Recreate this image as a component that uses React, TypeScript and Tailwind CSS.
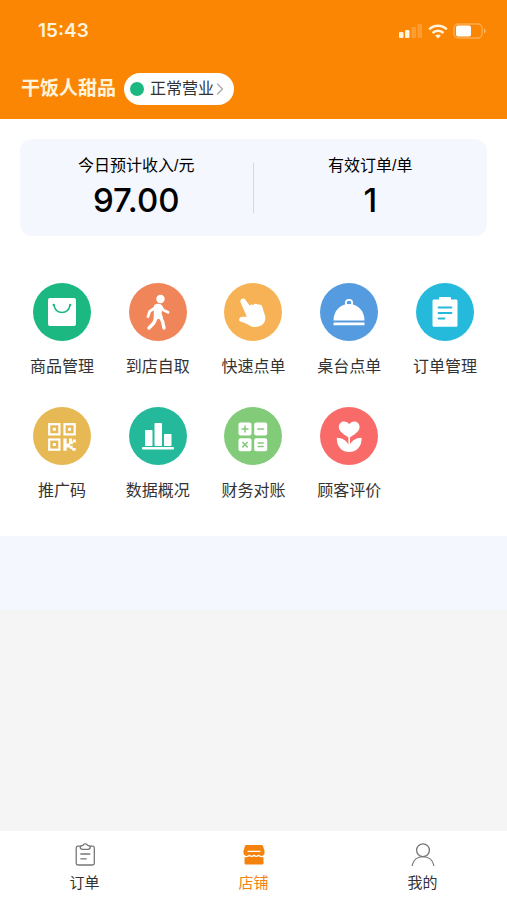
import { ChevronRight } from "lucide-react";
import { clsx } from "clsx";

const BagIcon = () => (
  <svg viewBox="0 0 58 58" className="size-full" fill="none" aria-hidden="true">
    <rect x="15" y="15" width="28" height="28" rx="2" fill="#fff" />
    <path d="M21 22.500c1 4.500 4 7 8 7s7-2.500 8-7" stroke="#1bb981" strokeWidth="1.500" strokeLinecap="round" />
    <circle cx="20.800" cy="22" r="1.200" fill="#1bb981" />
    <circle cx="37.200" cy="22" r="1.200" fill="#1bb981" />
  </svg>
);

const WalkIcon = () => (
  <svg viewBox="0 0 58 58" className="size-full" fill="none" stroke="#fff" strokeLinecap="round" strokeLinejoin="round" aria-hidden="true">
    <circle cx="31.500" cy="16" r="4.200" fill="#fff" stroke="none" />
    <path d="M26 22.500c2-1.200 5-1.200 6.500.5l-.8 7.500 1.300 4-7.500 1z" fill="#fff" strokeWidth="1.800" />
    <path d="M26.500 24.500l-5.800 3.800-1.700 5.400M32 24l2.800 3.300 4.200 2" strokeWidth="2.800" />
    <path d="M27.200 34.500l-2.400 5.500-4.800 5M31 33.500l2.500 4.700 1.500 6.800" strokeWidth="3.400" />
  </svg>
);

const HandIcon = () => (
  <svg viewBox="0 0 58 58" className="size-full" fill="#fff" aria-hidden="true">
    <path d="M16.600 19.600c-1.500-3.300 3-5.700 5-2.600l3.900 5.500c.8-1 2.600-1.300 3.900-.4 1.300-1.600 3.300-1.600 4.600-.3 1.900-.9 3.700 0 4.200 1.800l2.800 8.800c1.300 4.700-.6 8.300-4 10.100-3.600 1.900-8.200 1.900-11.600-.1-3-1.700-5.200-2.700-8.300-3.600-2.900-.9-2.400-4.500.3-4.900 2-.3 3.600 0 5.400-.4z" />
  </svg>
);

const ClocheIcon = () => (
  <svg viewBox="0 0 58 58" className="size-full" fill="#fff" aria-hidden="true">
    <circle cx="29" cy="20" r="3.200" fill="none" stroke="#fff" strokeWidth="1.800" />
    <path d="M13.500 37.500C13.500 28 20 21 29 21s15.500 7 15.500 16.500z" />
    <rect x="13.500" y="39.500" width="31" height="2.800" rx=".5" />
  </svg>
);

const ClipboardIcon = () => (
  <svg viewBox="0 0 58 58" className="size-full" fill="none" aria-hidden="true">
    <path d="M18 16.500h5v-1.200c0-.8.400-1.300 1.200-1.300h9.600c.8 0 1.200.5 1.200 1.300v1.200h5c1 0 1.500.6 1.500 1.500v24.300c0 1-.6 1.500-1.500 1.500H18c-1 0-1.500-.6-1.500-1.500V18c0-1 .6-1.500 1.500-1.500z" fill="#fff" />
    <path d="M22.500 24.500h13M22.500 30h13M22.500 35.500h6" stroke="#25badb" strokeWidth="1.800" strokeLinecap="round" />
  </svg>
);

const QrIcon = () => (
  <svg viewBox="0 0 58 58" className="size-full" fill="#fff" aria-hidden="true">
    <g fill="none" stroke="#fff" strokeWidth="2.200">
      <rect x="16.200" y="17.200" width="10.200" height="10.200" />
      <rect x="31.500" y="17.200" width="10.200" height="10.200" />
      <rect x="16.200" y="32.500" width="10.200" height="10.200" />
    </g>
    <path d="M19.800 20.800h3v3h-3zM35.100 20.800h3v3h-3zM19.800 36.100h3v3h-3z" />
    <path d="M30.400 31.400h3.200v12.300h-3.200zM36 31.400h3v3.200h-3zM39.800 32.500h3v3h-3zM33.600 36.500h2.400v-2h3.800v2.800H37v3.200h-3.400zM37 38.700h2.700v2.400h3v2.600h-3.400v-1.800H37z" />
  </svg>
);

const BarsIcon = () => (
  <svg viewBox="0 0 58 58" className="size-full" fill="#fff" aria-hidden="true">
    <rect x="16" y="23" width="7.500" height="16" rx=".8" />
    <rect x="25.500" y="16" width="7.500" height="23" rx=".8" />
    <rect x="35" y="27" width="7.500" height="12" rx=".8" />
    <rect x="13" y="40" width="32" height="2.600" rx="1" />
  </svg>
);

const CalcIcon = () => (
  <svg viewBox="0 0 58 58" className="size-full" fill="#fff" aria-hidden="true">
    <rect x="14.500" y="15.500" width="13" height="13" rx="2" />
    <rect x="30.200" y="15.500" width="13" height="13" rx="2" />
    <rect x="14.500" y="31.200" width="13" height="13" rx="2" />
    <rect x="30.200" y="31.200" width="13" height="13" rx="2" />
    <path
      d="M17.500 22h7M21 18.500v7M33.200 22h7M18.300 35l5.400 5.400M23.700 35l-5.400 5.400M33.700 36h6M33.700 39.500h6"
      fill="none"
      stroke="#82cb78"
      strokeWidth="1.500"
    />
  </svg>
);

const FlowerIcon = () => (
  <svg viewBox="0 0 58 58" className="size-full" fill="#fff" aria-hidden="true">
    <path d="M29.200 31c-4.500-3-10.400-6.400-10.400-10.700 0-6.300 7.400-7.600 10.400-3 3-4.600 10.400-3.300 10.400 3 0 4.300-5.900 7.700-10.400 10.700z" />
    <path d="M28.400 30h1.600v10h-1.600z" />
    <path d="M16.800 30.800c6 0 10 3 12.400 8 2.400-5 6.400-8 12.400-8 .2 8.700-4.600 14.200-12.400 14.200s-12.600-5.500-12.400-14.200z" />
  </svg>
);

const OrderTabIcon = () => (
  <svg viewBox="0 0 24 24" className="size-6" fill="none" stroke="#777" strokeWidth="1.300" strokeLinecap="round" strokeLinejoin="round" aria-hidden="true">
    <path d="M7.500 3.200H5c-1.100 0-1.800.7-1.800 1.800v15.200c0 1.100.7 1.800 1.800 1.800h14.500c1.100 0 1.800-.7 1.800-1.800V5c0-1.100-.7-1.800-1.800-1.800H17" />
    <path d="M7.200 4.300c0-1.300 1.200-1.800 2.800-2C10.300 1.300 11 .8 12.200.8s2 .5 2.300 1.500c1.600.2 2.800.7 2.800 2 0 1.300-1.200 2-2.500 2H9.700c-1.300 0-2.500-.7-2.500-2z" />
    <path d="M7.800 11h9M7.800 15.800h5.500" />
  </svg>
);

const ShopTabIcon = () => (
  <svg viewBox="0 0 24 24" className="size-6" fill="#f5820d" aria-hidden="true">
    <path d="M4.500 2h15c.8 0 1.200.4 1.500 1.100l1.500 4.700c.4 2.700-.4 4.500-2 5-1.200.3-2.700 0-4-1.200-1.300 1.400-3 1.400-4.500 0-1.500 1.400-3.200 1.400-4.500 0-1.300 1.200-2.800 1.500-4 1.200-1.600-.5-2.400-2.300-2-5L3 3.100C3.300 2.400 3.700 2 4.500 2z" />
    <path d="M2.500 14.200c2 .2 3.700-.1 5-1 1.500 1 3.200 1 4.500 0 1.300 1 3 1 4.500 0 1.300.9 3 1.200 5 1v5.800c0 1-.6 1.500-1.500 1.500H4c-.9 0-1.500-.5-1.500-1.500z" />
    <path d="M6 8.300h12" stroke="#fff" strokeWidth="1.200" strokeLinecap="round" />
  </svg>
);

const MineTabIcon = () => (
  <svg viewBox="0 0 24 24" className="size-6" fill="none" stroke="#777" strokeWidth="1.300" strokeLinecap="round" aria-hidden="true">
    <circle cx="12" cy="7.200" r="6.400" />
    <path d="M1.200 22.300C2.200 17 6.500 13.600 12 13.600S21.800 17 22.800 22.300" />
  </svg>
);

const menuItems = [
  { label: "商品管理", icon: BagIcon, color: "bg-[#1bb981]" },
  { label: "到店自取", icon: WalkIcon, color: "bg-[#f0855a]" },
  { label: "快速点单", icon: HandIcon, color: "bg-[#f6b255]" },
  { label: "桌台点单", icon: ClocheIcon, color: "bg-[#559bdf]" },
  { label: "订单管理", icon: ClipboardIcon, color: "bg-[#25badb]" },
  { label: "推广码", icon: QrIcon, color: "bg-[#e7b955]" },
  { label: "数据概况", icon: BarsIcon, color: "bg-[#24b99b]" },
  { label: "财务对账", icon: CalcIcon, color: "bg-[#82cb78]" },
  { label: "顾客评价", icon: FlowerIcon, color: "bg-[#f96b68]" },
];

const stats = [
  { label: "今日预计收入/元", value: "97.00" },
  { label: "有效订单/单", value: "1" },
];

const tabs = [
  { label: "订单", icon: OrderTabIcon },
  { label: "店铺", icon: ShopTabIcon, active: true },
  { label: "我的", icon: MineTabIcon },
];

function StatusBar() {
  return (
    <div className="flex h-[62px] items-center justify-between pr-5 pl-[38px] text-[#fff3dc]">
      <span className="font-['Inter'] text-[19px] font-semibold">15:43</span>
      <div className="flex items-center gap-[5px]">
        <svg viewBox="0 0 24 14" className="h-[14px] w-6" fill="currentColor" aria-hidden="true">
          <rect x="0" y="8" width="4.500" height="6" rx="1" />
          <rect x="6" y="6" width="4.500" height="8" rx="1" />
          <rect x="12.500" y="3" width="4.500" height="11" rx="1" opacity=".22" />
          <rect x="18.500" y="0" width="4.500" height="14" rx="1" opacity=".22" />
        </svg>
        <svg viewBox="0 0 20 15" className="h-[15px] w-5" fill="none" stroke="currentColor" strokeWidth="2.600" aria-hidden="true">
          <path d="M1.200 5.400c5-4.800 12.600-4.800 17.600 0M4.500 9c3.200-3 7.800-3 11 0" />
          <path d="M10 14.500l-2.900-3c1.700-1.500 4.100-1.500 5.800 0z" fill="currentColor" stroke="none" />
        </svg>
        <svg viewBox="0 0 34 16" className="h-4 w-[34px]" fill="none" aria-hidden="true">
          <rect x="1" y="1" width="28" height="14" rx="4" stroke="currentColor" strokeWidth="1.400" opacity=".35" />
          <rect x="3" y="2.500" width="15" height="11" rx="2" fill="#fff" />
          <path d="M31 5.500c2 .8 2 4.200 0 5z" fill="currentColor" opacity=".5" />
        </svg>
      </div>
    </div>
  );
}

export default function App() {
  return (
    <div className="flex min-h-screen flex-col bg-[#f5f5f5] font-['Liberation_Sans','Noto_Sans_CJK_SC',sans-serif] text-[#333]">
      <header className="bg-[#fb8604] pb-[3px]">
        <StatusBar />
        <div className="flex h-[54px] items-center gap-2 px-[21px]">
          <h1 className="text-[19px] font-bold text-[#fff3dc]">干饭人甜品</h1>
          <button className="flex h-8 items-center rounded-full bg-white pr-1 pl-[6px]">
            <span className="mr-[6px] size-[14px] rounded-full bg-[#1bb981]" />
            <span className="text-base">正常营业</span>
            <ChevronRight className="-ml-1 size-5 text-[#aaa]" strokeWidth={1.5} />
          </button>
        </div>
      </header>

      <main className="flex-1">
        <section className="bg-white px-5 pt-5 pb-[33px]">
          <div className="grid h-[97px] grid-cols-2 items-center divide-x divide-[#d8d9de] rounded-xl bg-[#f4f7fd]">
            {stats.map((s) => (
              <div key={s.label} className="flex h-[50px] flex-col items-center justify-center pb-1 text-black">
                <span className="text-base leading-7">{s.label}</span>
                <strong className="font-['Inter'] text-[33px] leading-10 font-medium">{s.value}</strong>
              </div>
            ))}
          </div>

          <div className="-mx-[6px] mt-[47px] grid grid-cols-5 gap-y-7">
            {menuItems.map((item) => (
              <button key={item.label} className="flex flex-col items-center gap-[14px]">
                <span className={clsx("size-[58px] rounded-full", item.color)}>
                  <item.icon />
                </span>
                <span className="text-base leading-6">{item.label}</span>
              </button>
            ))}
          </div>
        </section>
        <div className="h-[74px] bg-[#f4f7fd]" />
      </main>

      <nav className="grid h-[69px] grid-cols-3 bg-white pt-[6px]">
        {tabs.map((tab) => (
          <button
            key={tab.label}
            className={clsx("flex flex-col items-center justify-center gap-1", tab.active && "text-[#f5820d]")}
          >
            <tab.icon />
            <span className="text-[15px] leading-6">{tab.label}</span>
          </button>
        ))}
      </nav>
    </div>
  );
}
